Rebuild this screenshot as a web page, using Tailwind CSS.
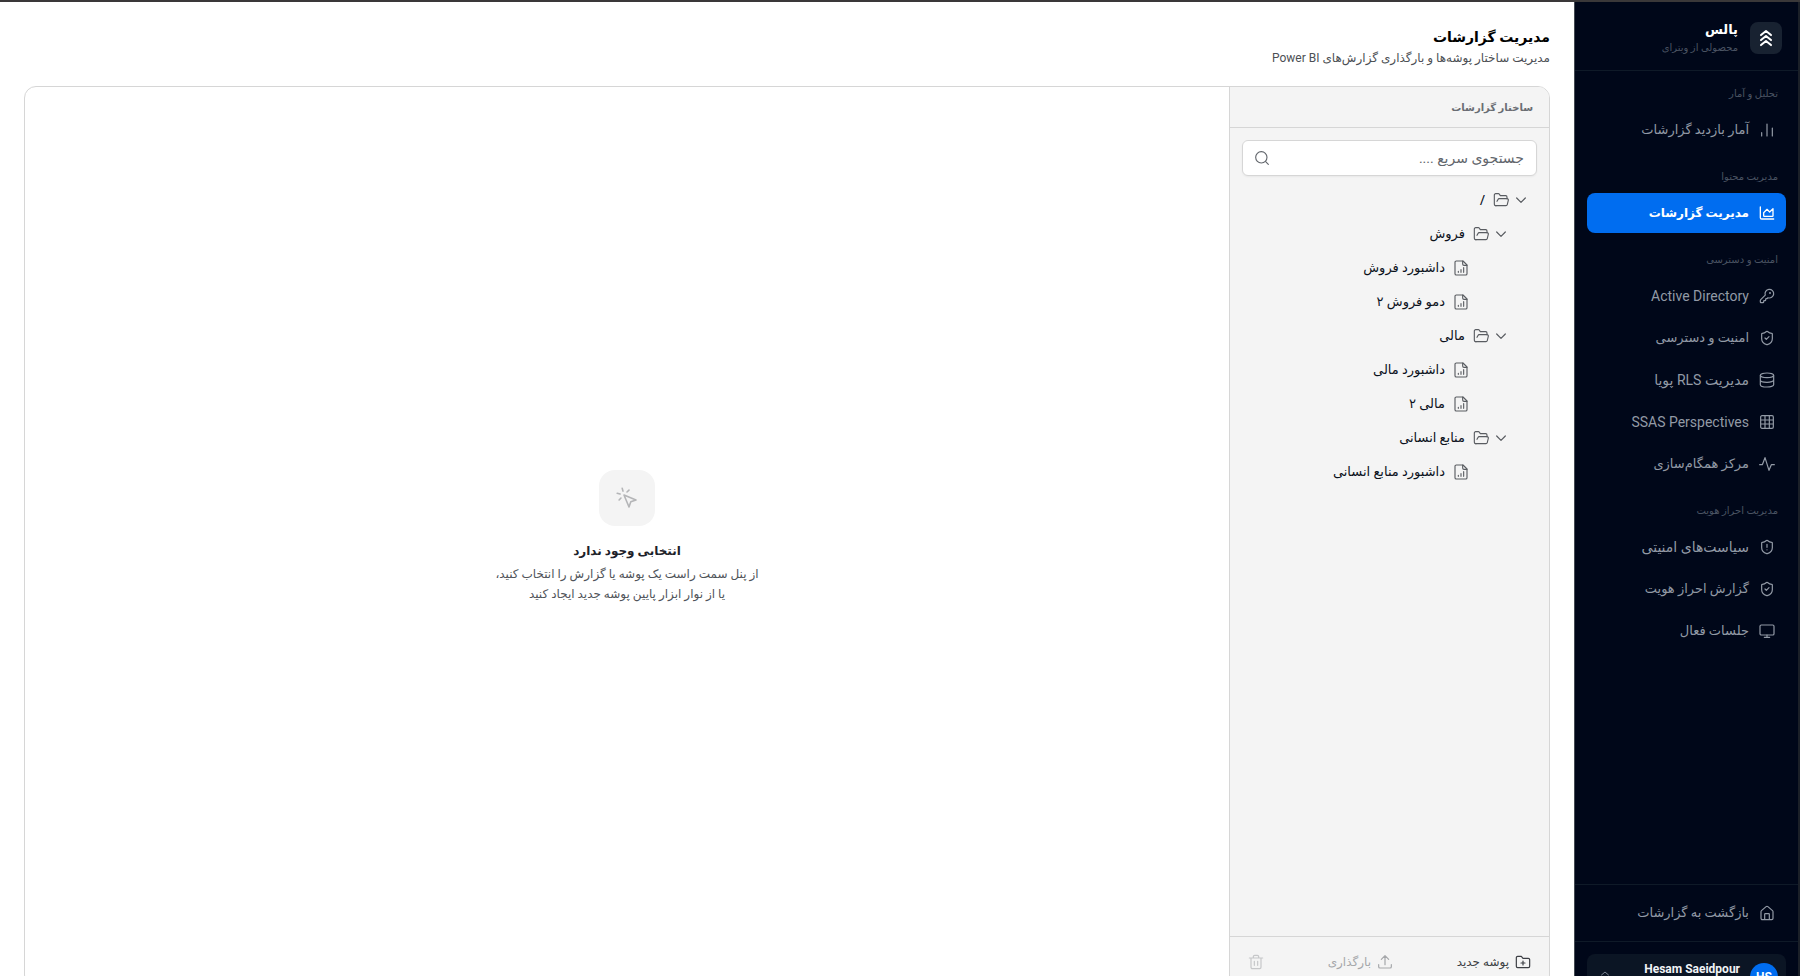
<!DOCTYPE html>
<html lang="fa" dir="rtl">

<head>
    <meta charset="utf-8" />
    <title>مدیریت گزارشات</title>
    <meta name="viewport" content="width=device-width, initial-scale=1.0" />
    <script src="https://cdn.jsdelivr.net/npm/@tailwindcss/browser@4"></script>
</head>

<body class="h-screen overflow-hidden bg-white font-[Roboto,'DejaVu_Sans',sans-serif]">
    <!-- icon sprite -->
    <svg class="hidden" xmlns="http://www.w3.org/2000/svg">
        <symbol id="chevron" viewBox="0 0 24 24"><path d="m5.500 9 6.500 6.500L18.500 9" /></symbol>
        <symbol id="folder" viewBox="0 0 24 24">
            <path d="M4.500 20.500H4a2 2 0 0 1-2-2v-14a2 2 0 0 1 2-2h3.900a2 2 0 0 1 1.700.9l.8 1.200a2 2 0 0 0 1.700.9H19a2 2 0 0 1 2 2V10" />
            <path d="m6 14 1.500-2.900A2 2 0 0 1 9.240 10H21a2 2 0 0 1 1.940 2.500l-1.540 6.500a2 2 0 0 1-1.950 1.500H4" />
        </symbol>
        <symbol id="report" viewBox="0 0 24 24">
            <path d="M15 1.500H5a2 2 0 0 0-2 2v17a2 2 0 0 0 2 2h14a2 2 0 0 0 2-2v-13z" />
            <path d="M14.500 1.500V6a2 2 0 0 0 2 2H21M8 18.500v-1.500M12 18.500v-4M16 18.500v-7" />
        </symbol>
        <symbol id="shield-check" viewBox="0 0 24 24">
            <path d="M20 13c0 5-3.500 7.500-7.660 8.950a1 1 0 0 1-.67-.01C7.500 20.500 4 18 4 13V6a1 1 0 0 1 1-1c2 0 4.500-1.200 6.240-2.720a1.170 1.170 0 0 1 1.520 0C14.510 3.810 17 5 19 5a1 1 0 0 1 1 1z" />
            <path d="m9 12 2 2 4-4" />
        </symbol>
    </svg>

    <div class="flex h-[calc(100vh+35px)] border-t-2 border-[#3a3839]">

        <!-- sidebar -->
        <aside class="flex w-[226px] shrink-0 flex-col border-r-2 border-l border-r-[#1b2028] border-l-[#444a52] bg-[#000719]">
            <div class="flex h-[69px] shrink-0 items-center gap-3 border-b border-[#0f1a28] px-4 pt-1">
                <div class="flex size-8 items-center justify-center rounded-lg bg-[#182231]">
                    <svg class="size-5 text-white" viewBox="0 0 24 24" fill="none" stroke="currentColor" stroke-width="2.4" stroke-linecap="round" stroke-linejoin="round">
                        <path d="m6 8.500 6-5 6 5M6 14.500l6-5 6 5M6 20.500l6-5 6 5" />
                    </svg>
                </div>
                <div>
                    <div class="text-[13px] leading-5 font-bold text-white">پالس</div>
                    <div class="text-[10px] leading-4 text-[#4a5362]">محصولی از ویترای</div>
                </div>
            </div>

            <nav class="flex-1 px-3 pt-[15px] text-[13px] text-[#929aa6]">
                <h3 class="mb-2 px-2 text-[10px] leading-4 text-[#4a5362]">تحلیل و آمار</h3>
                <a href="#" class="flex h-10 items-center gap-[10px] rounded-lg px-[11px]">
                    <svg class="size-4" viewBox="0 0 24 24" fill="none" stroke="currentColor" stroke-width="1.8" stroke-linecap="round"><path d="M4 21v-5M12 21V3M20 21V9" /></svg>
                    آمار بازدید گزارشات
                </a>

                <h3 class="mt-[19px] mb-2 px-2 text-[10px] leading-4 text-[#4a5362]">مدیریت محتوا</h3>
                <a href="#" class="flex h-10 items-center gap-[10px] rounded-lg bg-[#006df0] px-[11px] text-xs font-bold text-white">
                    <svg class="size-4" viewBox="0 0 24 24" fill="none" stroke="currentColor" stroke-width="2" stroke-linecap="round" stroke-linejoin="round">
                        <path d="M2 3v16a2 2 0 0 0 2 2h18" />
                        <path d="M7 11.500V16a1 1 0 0 0 1 1h12a1 1 0 0 0 1-1V5.500l-5 5-4-4z" />
                    </svg>
                    مدیریت گزارشات
                </a>

                <h3 class="mt-[19px] mb-2 px-2 text-[10px] leading-4 text-[#4a5362]">امنیت و دسترسی</h3>
                <div class="flex flex-col gap-[2px]">
                    <a href="#" class="flex h-10 items-center gap-[10px] rounded-lg px-[11px] text-sm">
                        <svg class="size-4" viewBox="0 0 24 24" fill="none" stroke="currentColor" stroke-width="1.8" stroke-linecap="round" stroke-linejoin="round">
                            <path d="M2.586 17.414A2 2 0 0 0 2 18.828V21a1 1 0 0 0 1 1h3a1 1 0 0 0 1-1v-1a1 1 0 0 1 1-1h1a1 1 0 0 0 1-1v-1a1 1 0 0 1 1-1h.172a2 2 0 0 0 1.414-.586l.814-.814a6.500 6.500 0 1 0-4-4z" />
                            <circle cx="16.500" cy="7.500" r=".6" fill="currentColor" />
                        </svg>
                        Active Directory
                    </a>
                    <a href="#" class="flex h-10 items-center gap-[10px] rounded-lg px-[11px]">
                        <svg class="size-4" fill="none" stroke="currentColor" stroke-width="1.8" stroke-linecap="round" stroke-linejoin="round"><use href="#shield-check" /></svg>
                        امنیت و دسترسی
                    </a>
                    <a href="#" class="flex h-10 items-center gap-[10px] rounded-lg px-[11px] text-sm">
                        <svg class="size-4" viewBox="0 0 24 24" fill="none" stroke="currentColor" stroke-width="1.8">
                            <ellipse cx="12" cy="5" rx="10" ry="3.500" />
                            <path d="M2 5v14c0 2 4.500 3.500 10 3.500S22 21 22 19V5M2 12c0 2 4.500 3.500 10 3.500S22 14 22 12" />
                        </svg>
                        مدیریت RLS پویا
                    </a>
                    <a href="#" class="flex h-10 items-center gap-[10px] rounded-lg px-[11px] text-sm">
                        <svg class="size-4" viewBox="0 0 24 24" fill="none" stroke="currentColor" stroke-width="1.8">
                            <rect x="2.500" y="2.500" width="19" height="19" rx="2" />
                            <path d="M2.500 9h19M2.500 15h19M9 2.500v19M15.500 2.500v19" />
                        </svg>
                        SSAS Perspectives
                    </a>
                    <a href="#" class="flex h-10 items-center gap-[10px] rounded-lg px-[11px]">
                        <svg class="size-4" viewBox="0 0 24 24" fill="none" stroke="currentColor" stroke-width="1.8" stroke-linecap="round" stroke-linejoin="round"><path d="M1 13h4L9 2.500l6 19L18.500 13H23" /></svg>
                        مرکز همگام‌سازی
                    </a>
                </div>

                <h3 class="mt-[19px] mb-2 px-2 text-[10px] leading-4 text-[#4a5362]">مدیریت احراز هویت</h3>
                <div class="flex flex-col gap-[2px]">
                    <a href="#" class="flex h-10 items-center gap-[10px] rounded-lg px-[11px] text-sm">
                        <svg class="size-4" viewBox="0 0 24 24" fill="none" stroke="currentColor" stroke-width="1.8" stroke-linecap="round" stroke-linejoin="round">
                            <path d="M20 13c0 5-3.500 7.500-7.660 8.950a1 1 0 0 1-.67-.01C7.500 20.500 4 18 4 13V6a1 1 0 0 1 1-1c2 0 4.500-1.200 6.240-2.720a1.170 1.170 0 0 1 1.520 0C14.510 3.810 17 5 19 5a1 1 0 0 1 1 1z" />
                            <path d="M12 8v4.500M12 16.200v.1" />
                        </svg>
                        سیاست‌های امنیتی
                    </a>
                    <a href="#" class="flex h-10 items-center gap-[10px] rounded-lg px-[11px]">
                        <svg class="size-4" fill="none" stroke="currentColor" stroke-width="1.8" stroke-linecap="round" stroke-linejoin="round"><use href="#shield-check" /></svg>
                        گزارش احراز هویت
                    </a>
                    <a href="#" class="flex h-10 items-center gap-[10px] rounded-lg px-[11px]">
                        <svg class="size-4" viewBox="0 0 24 24" fill="none" stroke="currentColor" stroke-width="1.8" stroke-linecap="round">
                            <rect x="1.500" y="3" width="21" height="15" rx="2" />
                            <path d="M8 21.500h8M12 18v3.500" />
                        </svg>
                        جلسات فعال
                    </a>
                </div>
            </nav>

            <div class="border-t border-[#0f1a28] px-3 py-2 text-[13px] text-[#929aa6]">
                <a href="#" class="flex h-10 items-center gap-[10px] rounded-lg px-[11px]">
                    <svg class="size-4" viewBox="0 0 24 24" fill="none" stroke="currentColor" stroke-width="1.8" stroke-linejoin="round">
                        <path d="M3 10a2 2 0 0 1 .7-1.500l7-6a2 2 0 0 1 2.600 0l7 6A2 2 0 0 1 21 10v10a2 2 0 0 1-2 2H5a2 2 0 0 1-2-2z" />
                        <path d="M8.500 22v-8a1 1 0 0 1 1-1h5a1 1 0 0 1 1 1v8" />
                    </svg>
                    بازگشت به گزارشات
                </a>
            </div>
            <div class="border-t border-[#0f1a28] p-3">
                <button type="button" class="flex h-[45px] w-full items-center gap-[10px] rounded-lg bg-[#0b1524] px-2 text-right">
                    <span class="flex size-7 items-center justify-center rounded-full bg-[#006df0] text-xs font-bold text-white">HS</span>
                    <span class="flex-1">
                        <span class="block text-xs leading-4 font-bold text-[#f1f3f6]">Hesam Saeidpour</span>
                        <span class="block text-[10px] leading-4 text-[#4a5362]">مدیر سیستم</span>
                    </span>
                    <svg class="mx-1 size-3 text-[#7b8491]" viewBox="0 0 24 24" fill="none" stroke="currentColor" stroke-width="2" stroke-linecap="round" stroke-linejoin="round"><path d="m5 8 7-6 7 6M5 16l7 6 7-6" /></svg>
                </button>
            </div>
        </aside>

        <!-- content -->
        <main class="flex min-w-0 flex-1 flex-col p-6">
            <header class="mb-[19px]">
                <h1 class="text-sm leading-[23px] font-bold text-black">مدیریت گزارشات</h1>
                <p class="text-xs leading-[18px] text-[#4c4f54]">مدیریت ساختار پوشه‌ها و بارگذاری گزارش‌های Power BI</p>
            </header>

            <div class="flex min-h-0 flex-1 overflow-hidden rounded-xl border border-[#d6d6d6]">
                <section class="flex w-80 shrink-0 flex-col border-l border-[#d6d6d6] bg-[#f4f4f4]">
                    <h2 class="flex h-[41px] items-center border-b border-[#d6d6d6] px-4 text-[10px] font-bold text-[#696d73]">ساختار گزارشات</h2>

                    <div class="flex-1 px-3 pt-3">
                        <div class="relative mb-[7px]">
                            <input type="text" aria-label="جستجوی سریع" placeholder="جستجوی سریع ...." class="block h-9 w-full rounded-md border border-[#d6d6d6] bg-white pr-3 pl-10 text-sm placeholder-[#62666c] shadow-xs" />
                            <svg class="absolute top-[10px] left-3 size-4 text-[#62666c]" viewBox="0 0 24 24" fill="none" stroke="currentColor" stroke-width="1.7" stroke-linecap="round"><circle cx="11" cy="11" r="8.500" /><path d="m17.500 17.500 4 4" /></svg>
                        </div>

                        <ul class="px-2 text-[13px] font-medium text-[#0b111b] [&_svg]:fill-none [&_svg]:stroke-[#595c61] [&_svg]:[stroke-linecap:round] [&_svg]:[stroke-linejoin:round]">
                            <li class="flex h-[34px] items-center gap-2"><svg class="-ml-1 size-4" stroke-width="1.8"><use href="#chevron" /></svg><svg class="size-4" stroke-width="1.7"><use href="#folder" /></svg>/</li>
                            <li class="flex h-[34px] items-center gap-2 pr-5"><svg class="-ml-1 size-4" stroke-width="1.8"><use href="#chevron" /></svg><svg class="size-4" stroke-width="1.7"><use href="#folder" /></svg>فروش</li>
                            <li class="flex h-[34px] items-center gap-2 pr-[60px]"><svg class="size-4" stroke-width="1.7"><use href="#report" /></svg>داشبورد فروش</li>
                            <li class="flex h-[34px] items-center gap-2 pr-[60px]"><svg class="size-4" stroke-width="1.7"><use href="#report" /></svg>دمو فروش ۲</li>
                            <li class="flex h-[34px] items-center gap-2 pr-5"><svg class="-ml-1 size-4" stroke-width="1.8"><use href="#chevron" /></svg><svg class="size-4" stroke-width="1.7"><use href="#folder" /></svg>مالی</li>
                            <li class="flex h-[34px] items-center gap-2 pr-[60px]"><svg class="size-4" stroke-width="1.7"><use href="#report" /></svg>داشبورد مالی</li>
                            <li class="flex h-[34px] items-center gap-2 pr-[60px]"><svg class="size-4" stroke-width="1.7"><use href="#report" /></svg>مالی ۲</li>
                            <li class="flex h-[34px] items-center gap-2 pr-5"><svg class="-ml-1 size-4" stroke-width="1.8"><use href="#chevron" /></svg><svg class="size-4" stroke-width="1.7"><use href="#folder" /></svg>منابع انسانی</li>
                            <li class="flex h-[34px] items-center gap-2 pr-[60px]"><svg class="size-4" stroke-width="1.7"><use href="#report" /></svg>داشبورد منابع انسانی</li>
                        </ul>
                    </div>

                    <div class="flex h-[50px] items-center justify-between border-t border-[#d6d6d6] px-[18px] text-xs">
                        <button type="button" class="flex items-center gap-[6px] font-medium text-[#3c3f44]">
                            <svg class="size-4" viewBox="0 0 24 24" fill="none" stroke="currentColor" stroke-width="1.8" stroke-linecap="round" stroke-linejoin="round">
                                <path d="M20 20.500a2 2 0 0 0 2-2V8.500a2 2 0 0 0-2-2h-8l-2.500-3H4a2 2 0 0 0-2 2v13a2 2 0 0 0 2 2zM12 10.500v6M9 13.500h6" />
                            </svg>
                            پوشه جدید
                        </button>
                        <button type="button" disabled class="flex items-center gap-[6px] text-[#a5a7aa]">
                            <svg class="size-4" viewBox="0 0 24 24" fill="none" stroke="currentColor" stroke-width="1.8" stroke-linecap="round" stroke-linejoin="round">
                                <path d="M12 16V2.500M6.500 8 12 2.500 17.500 8M2.500 16v3a2 2 0 0 0 2 2h15a2 2 0 0 0 2-2v-3" />
                            </svg>
                            بارگذاری
                        </button>
                        <button type="button" disabled aria-label="حذف" class="text-[#c6c7c9]">
                            <svg class="size-4" viewBox="0 0 24 24" fill="none" stroke="currentColor" stroke-width="1.8" stroke-linecap="round" stroke-linejoin="round">
                                <path d="M2 6h20M19.500 6v14a2 2 0 0 1-2 2h-11a2 2 0 0 1-2-2V6M8 6V4a2 2 0 0 1 2-2h4a2 2 0 0 1 2 2v2M9.500 11v6M14.500 11v6" />
                            </svg>
                        </button>
                    </div>
                </section>

                <!-- empty state -->
                <section class="flex flex-1 flex-col items-center justify-center text-center">
                    <div class="mb-4 flex size-14 items-center justify-center rounded-2xl bg-[#f4f4f4]">
                        <svg class="size-6 text-[#b4b5b7]" viewBox="0 0 24 24" fill="none" stroke="currentColor" stroke-width="1.6" stroke-linecap="round" stroke-linejoin="round">
                            <path d="m9 9 5 12 1.800-5.200L21 14z" />
                            <path d="M7.200 2.200 8 5.100M5.100 8l-2.900-.8M14 4.100 12 6M6 12l-1.900 2" />
                        </svg>
                    </div>
                    <h2 class="mb-1 text-xs leading-[18px] font-bold text-[#1d222a]">انتخابی وجود ندارد</h2>
                    <p class="text-xs leading-5 text-[#50545a]">از پنل سمت راست یک پوشه یا گزارش را انتخاب کنید،<br>یا از نوار ابزار پایین پوشه جدید ایجاد کنید</p>
                </section>
            </div>
        </main>
    </div>
</body>

</html>
